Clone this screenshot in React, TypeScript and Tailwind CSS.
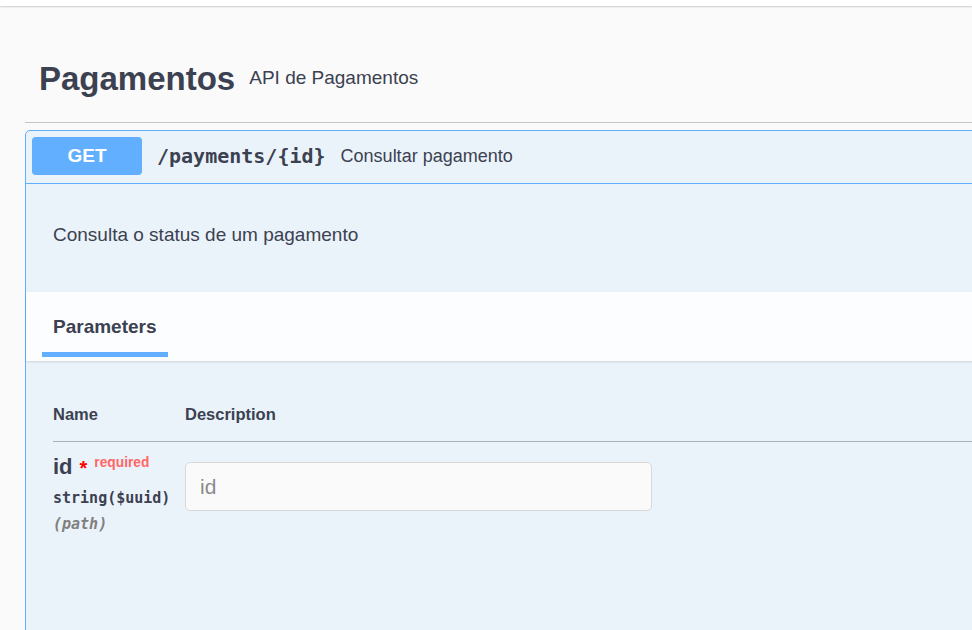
import React from "react";

export default function App() {
  return (
    <div
      className="w-[972px] h-[630px] overflow-hidden bg-[#fafafa] text-[#3b4151]"
      style={{ fontFamily: '"Liberation Sans", Arial, sans-serif' }}
    >
      <div className="h-[6px] bg-white shadow-[0_1px_2px_rgba(0,0,0,0.18)]" />
      <div className="pl-[25px]">
        <div className="w-[1000px]">
          <div className="flex items-center pl-[14px] pt-[53px] pb-[23px] border-b border-[#c4c6cb]">
            <h3 className="text-[33px] leading-[40px] font-bold">Pagamentos</h3>
            <span className="ml-[14px] text-[19px] leading-[24px] mb-[3px]">API de Pagamentos</span>
          </div>

          <div className="mt-[7px] rounded-[5px] border border-[#61affe] bg-[#ebf3fa]">
            {/* summary */}
            <div className="flex items-center pl-[6px] pt-[6px] pb-[8px] border-b border-[#61affe]">
              <div className="w-[110px] h-[38px] rounded-[4px] bg-[#61affe] flex items-center justify-center text-white font-bold text-[19px]">
                GET
              </div>
              <span
                className="ml-[15px] text-[20px] font-bold leading-[26px]"
                style={{ fontFamily: '"DejaVu Sans Mono", monospace' }}
              >
                /payments/{"{id}"}
              </span>
              <span className="ml-[15px] text-[18px] leading-[24px]">Consultar pagamento</span>
            </div>

            {/* description */}
            <div className="pl-[27px] pt-[40px] pb-[46px]">
              <p className="text-[19px] leading-[22px]">Consulta o status de um pagamento</p>
            </div>

            {/* parameters header */}
            <div className="h-[69px] bg-[#fcfdfe] shadow-[0_1px_2px_rgba(0,0,0,0.12)] pl-[16px] relative">
              <div className="inline-flex flex-col">
                <div className="px-[11px] pt-[24px] text-[19px] leading-[22px] font-bold">Parameters</div>
                <div className="mt-[14px] h-[5px] bg-[#61affe]" />
              </div>
            </div>

            {/* table */}
            <div className="pl-[27px] h-[300px]">
              <div className="flex pt-[43px] pb-[17px] border-b border-[#a9b0bc] text-[16.5px] leading-[20px] font-bold">
                <div className="w-[132px]">Name</div>
                <div>Description</div>
              </div>
              <div className="flex">
                <div className="w-[132px] pt-[12px]">
                  <div className="flex items-start leading-[26px]">
                    <span className="text-[22px] font-bold">id</span>
                    <span className="ml-[7px] text-[20px] font-bold text-[#ff0000] leading-[20px] mt-[4px]">*</span>
                    <span className="ml-[7px] text-[13.75px] font-bold text-[#ff6666] leading-[16px] mt-[1px]">required</span>
                  </div>
                  <div
                    className="mt-[8px] text-[15px] leading-[20px] font-bold"
                    style={{ fontFamily: '"DejaVu Sans Mono", monospace' }}
                  >
                    string($uuid)
                  </div>
                  <div
                    className="mt-[6px] text-[15px] leading-[20px] font-bold italic text-[#808080]"
                    style={{ fontFamily: '"DejaVu Sans Mono", monospace' }}
                  >
                    (path)
                  </div>
                </div>
                <div className="pt-[20px]">
                  <input
                    placeholder="id"
                    className="w-[467px] h-[49px] rounded-[5px] border border-[#d9d9d9] bg-[#fafafa] px-[14px] text-[21px] placeholder:text-[#8a8a8a] outline-none"
                    style={{ fontFamily: '"Liberation Sans", Arial, sans-serif' }}
                  />
                </div>
              </div>
            </div>
          </div>
        </div>
      </div>
    </div>
  );
}
